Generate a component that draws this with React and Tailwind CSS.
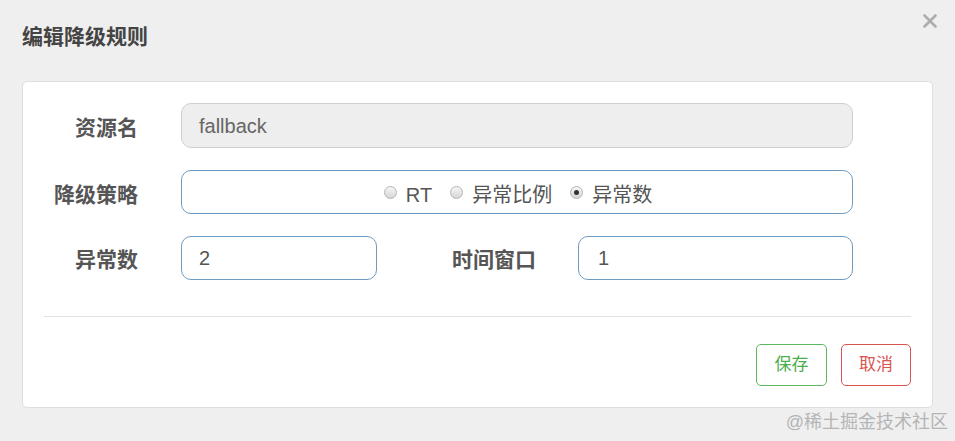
const font = { fontFamily: '"Liberation Sans", "Noto Sans CJK SC", sans-serif' }

function Radio({ checked, label }) {
  return (
    <span className="flex items-center">
      <span className="flex h-[13px] w-[13px] items-center justify-center rounded-full border border-[#b5b5b5] bg-gradient-to-b from-[#f6f6f6] to-[#d6d6d6]">
        {checked && <span className="h-[5px] w-[5px] rounded-full bg-[#333]" />}
      </span>
      <span className="ml-[9px] pt-[5px] text-[20px] text-[#555]">{label}</span>
    </span>
  )
}

export default function App() {
  return (
    <div style={font} className="relative h-[441px] w-[955px] overflow-hidden bg-[#efefef]">
      {/* header */}
      <div className="flex h-[81px] items-start px-[22px] pt-[25px]">
        <h4 className="text-[21px] font-bold leading-[24px] text-[#444]">编辑降级规则</h4>
      </div>
      <button className="absolute right-[18px] top-[14px]">
        <svg width="14" height="14" viewBox="0 0 14 14">
          <path d="M1.5 1.5 L12.5 12.5 M12.5 1.5 L1.5 12.5" stroke="#adadad" strokeWidth="2.6" strokeLinecap="round" />
        </svg>
      </button>

      {/* body card */}
      <div className="mx-[22px] h-[327px] w-[911px] rounded-[5px] border border-[#dedede] bg-white px-[21px] pt-[21px]">
        <div className="flex flex-col gap-[22px]">
          <div className="flex items-center">
            <label className="w-[94px] pt-[4px] text-right text-[21px] font-bold text-[#555]">资源名</label>
            <div className="ml-[43px] flex h-[45px] w-[672px] items-center rounded-[10px] border border-[#cfcfcf] bg-[#eeeeee] px-[17px] text-[20px] text-[#666]">
              fallback
            </div>
          </div>

          <div className="flex items-center">
            <label className="w-[94px] pt-[6px] text-right text-[21px] font-bold text-[#555]">降级策略</label>
            <div className="ml-[43px] flex h-[44px] w-[672px] items-center justify-center gap-[18px] rounded-[10px] border border-[#6f9bc2] pl-[2px]">
              <Radio label="RT" />
              <Radio label="异常比例" />
              <Radio checked label="异常数" />
            </div>
          </div>

          <div className="flex items-center">
            <label className="w-[94px] pt-[4px] text-right text-[21px] font-bold text-[#555]">异常数</label>
            <div className="ml-[43px] flex h-[44px] w-[196px] items-center rounded-[10px] border border-[#6f9bc2] px-[17px] text-[20px] text-[#555]">
              2
            </div>
            <label className="w-[159px] pt-[4px] text-right text-[21px] font-bold text-[#555]">时间窗口</label>
            <div className="ml-[42px] flex h-[44px] w-[275px] items-center rounded-[10px] border border-[#6f9bc2] px-[19px] text-[20px] text-[#555]">
              1
            </div>
          </div>
        </div>

        <div className="mt-[36px] border-t border-[#e2e2e2]" />

        <div className="mt-[27px] flex justify-end gap-[14px]">
          <button className="flex h-[42px] w-[71px] items-center justify-center rounded-[5px] border border-[#5cb85c] text-[17px] text-[#4cae4c]">
            保存
          </button>
          <button className="flex h-[42px] w-[70px] items-center justify-center rounded-[5px] border border-[#d9534f] text-[17px] text-[#d9534f]">
            取消
          </button>
        </div>
      </div>

      <div className="absolute bottom-[5px] right-[7px] text-[18px] text-[#b5b5b5]">@稀土掘金技术社区</div>
    </div>
  )
}
